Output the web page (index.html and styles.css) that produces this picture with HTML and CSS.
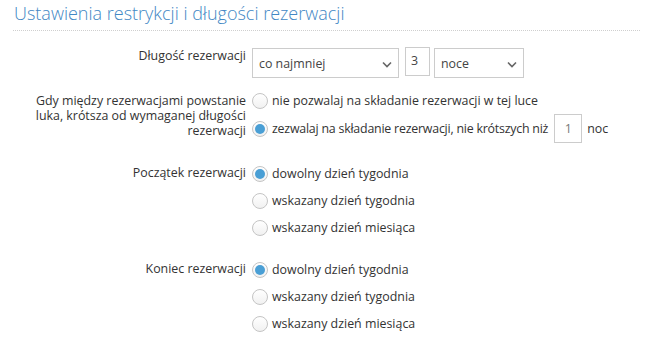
FILE: index.html
```html
<!DOCTYPE html>
<html lang="pl">
<head>
<meta charset="utf-8">
<link rel="stylesheet" href="styles.css">
</head>
<body>
<div class="page">
  <h2 class="title">Ustawienia restrykcji i długości rezerwacji</h2>
  <div class="form">
    <div class="row row-len">
      <div class="label">Długość rezerwacji</div>
      <div class="controls inline">
        <div class="select sel-main"><span>co najmniej</span><svg class="chev" width="10" height="7" viewBox="0 0 10 7"><path d="M1 1.5 L5 5.5 L9 1.5" fill="none" stroke="#666" stroke-width="1.6"/></svg></div>
        <div class="num num-3">3</div>
        <div class="select sel-unit"><span>noce</span><svg class="chev" width="10" height="7" viewBox="0 0 10 7"><path d="M1 1.5 L5 5.5 L9 1.5" fill="none" stroke="#666" stroke-width="1.6"/></svg></div>
      </div>
    </div>
    <div class="row row-gap">
      <div class="label">Gdy między rezerwacjami powstanie luka, krótsza od wymaganej długości rezerwacji</div>
      <div class="controls">
        <div class="opt opt-a"><span class="radio"></span>nie pozwalaj na składanie rezerwacji w tej luce</div>
        <div class="opt opt-b"><span class="radio on"></span><span class="tight">zezwalaj na składanie rezerwacji, nie krótszych niż</span><span class="num num-1">1</span>noc</div>
      </div>
    </div>
    <div class="row row-start">
      <div class="label">Początek rezerwacji</div>
      <div class="controls list">
        <div class="opt"><span class="radio on"></span>dowolny dzień tygodnia</div>
        <div class="opt"><span class="radio"></span>wskazany dzień tygodnia</div>
        <div class="opt"><span class="radio"></span>wskazany dzień miesiąca</div>
      </div>
    </div>
    <div class="row row-end">
      <div class="label">Koniec rezerwacji</div>
      <div class="controls list">
        <div class="opt"><span class="radio on"></span>dowolny dzień tygodnia</div>
        <div class="opt"><span class="radio"></span>wskazany dzień tygodnia</div>
        <div class="opt"><span class="radio"></span>wskazany dzień miesiąca</div>
      </div>
    </div>
  </div>
</div>
</body>
</html>
```
FILE: styles.css
```css
* { box-sizing: border-box; }
html, body { margin: 0; padding: 0; background: #fff; }
body {
  font-family: "Open Sans", "DejaVu Sans", sans-serif;
  font-size: 12.4px;
  color: #333;
  overflow: hidden;
}
.page { padding: 0 5px 0 13px; }
.title {
  margin: 0;
  padding: 0 0 0 1px;
  font-size: 18px;
  font-weight: 300;
  color: #4287c4;
  line-height: 26px;
  height: 31px;
  border-bottom: 1px dotted #cfcfcf;
}
.form { padding-top: 16px; }
.row { display: flex; align-items: flex-start; }
.label {
  width: 233px;
  flex: none;
  text-align: right;
  line-height: 15px;
}
.controls { margin-left: 6px; }
.inline { display: flex; align-items: flex-start; gap: 6px; }
.select {
  display: flex;
  align-items: center;
  justify-content: space-between;
  height: 30px;
  border: 1px solid #ccc;
  padding: 0 6px 0 6px;
  color: #444;
  margin-top: 1px;
}
.sel-main { width: 147px; }
.sel-unit { width: 90px; margin-left: -2px; }
.chev { margin-top: 2px; }
.num {
  display: inline-flex;
  justify-content: center;
  height: 29px;
  border: 1px solid #ccc;
  color: #444;
}
.num-3 { width: 25px; padding-top: 4px; justify-content: flex-start; padding-left: 5px; }
.row-len .label { padding-top: 1px; }
.row-gap { margin-top: 15px; }
.opt {
  display: flex;
  align-items: center;
  white-space: nowrap;
  line-height: 15px;
}
.opt-a { height: 15px; }
.opt-b { margin-top: 6px; }
.tight { letter-spacing: -0.22px; }
.num-1 {
  width: 28px;
  height: 29px;
  align-items: center;
  margin: 0 5px 0 6px;
  color: #777;
}
.radio {
  flex: none;
  width: 16px;
  height: 16px;
  border-radius: 50%;
  border: 1px solid #c4c4c4;
  background: linear-gradient(#fff, #f1f1f1);
  margin-right: 4px;
  position: relative;
}
.radio.on::after {
  content: "";
  position: absolute;
  left: 2px; top: 2px;
  width: 10px; height: 10px;
  border-radius: 50%;
  background: #4a9fd5;
}
.row-start { margin-top: 17px; }
.row-end { margin-top: 15px; }
.list .opt { height: 27px; }
.row-start .label, .row-end .label { padding-top: 5px; }
```
